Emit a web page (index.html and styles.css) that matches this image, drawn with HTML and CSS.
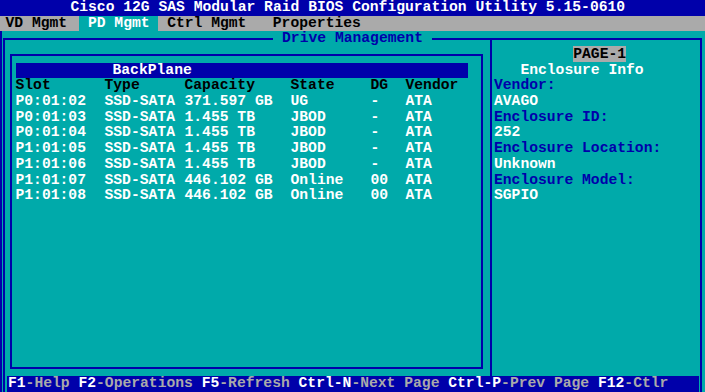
FILE: index.html
```html
<!DOCTYPE html>
<html lang="en">
<head>
    <meta charset="UTF-8">
    <title>Drive Management</title>
    <link rel="stylesheet" href="styles.css">
</head>
<body>
    <div class="screen">
        <div class="titleBar">Cisco 12G SAS Modular Raid BIOS Configuration Utility 5.15-0610</div>
        <div class="menuBar">
            <span class="tab">VD Mgmt</span>
            <span class="tab active">PD Mgmt</span>
            <span class="tab">Ctrl Mgmt</span>
            <span class="tab">Properties</span>
        </div>
        <div class="desk">
            <div class="frame">
                <div class="frameTitle">Drive Management</div>

                <div class="leftPane">
                    <div class="box">
                        <div class="boxHead">BackPlane</div>
                        <div class="driveRow head">
                            <span>Slot</span><span>Type</span><span>Capacity</span><span>State</span><span>DG</span><span>Vendor</span>
                        </div>
                        <div class="driveRow">
                            <span>P0:01:02</span><span>SSD-SATA</span><span>371.597 GB</span><span>UG</span><span>-</span><span>ATA</span>
                        </div>
                        <div class="driveRow">
                            <span>P0:01:03</span><span>SSD-SATA</span><span>1.455 TB</span><span>JBOD</span><span>-</span><span>ATA</span>
                        </div>
                        <div class="driveRow">
                            <span>P0:01:04</span><span>SSD-SATA</span><span>1.455 TB</span><span>JBOD</span><span>-</span><span>ATA</span>
                        </div>
                        <div class="driveRow">
                            <span>P1:01:05</span><span>SSD-SATA</span><span>1.455 TB</span><span>JBOD</span><span>-</span><span>ATA</span>
                        </div>
                        <div class="driveRow">
                            <span>P1:01:06</span><span>SSD-SATA</span><span>1.455 TB</span><span>JBOD</span><span>-</span><span>ATA</span>
                        </div>
                        <div class="driveRow">
                            <span>P1:01:07</span><span>SSD-SATA</span><span>446.102 GB</span><span>Online</span><span>00</span><span>ATA</span>
                        </div>
                        <div class="driveRow">
                            <span>P1:01:08</span><span>SSD-SATA</span><span>446.102 GB</span><span>Online</span><span>00</span><span>ATA</span>
                        </div>
                    </div>
                </div>

                <div class="rightPane">
                    <div class="page"><span>PAGE-1</span></div>
                    <div class="infoTitle">Enclosure Info</div>
                    <div class="label">Vendor:</div>
                    <div>AVAGO</div>
                    <div class="label">Enclosure ID:</div>
                    <div>252</div>
                    <div class="label">Enclosure Location:</div>
                    <div>Unknown</div>
                    <div class="label">Enclosure Model:</div>
                    <div>SGPIO</div>
                </div>

                <div class="statusBar"><b>F1</b>-Help <b>F2</b>-Operations <b>F5</b>-Refresh <b>Ctrl-N</b>-Next Page <b>Ctrl-P</b>-Prev Page <b>F12</b>-Ctlr</div>
            </div>
        </div>
    </div>
</body>
</html>
```

FILE: styles.css
```css
html, body{
    margin: 0;
}
body{
    width: 705px;
    height: 392px;
    overflow: hidden;
    background: #00aaaa;
    color: #fff;
    font: bold 14.6875px/15.68px "Liberation Mono", "DejaVu Sans Mono", monospace;
}

.screen{
    display: flex;
    flex-direction: column;
    height: 392px;
}

/* top bars */
.titleBar{
    height: 15.68px;
    background: #0000aa;
    padding-left: 8ch;
    white-space: pre;
}
.menuBar{
    display: flex;
    height: 15.68px;
    background: #aaaaaa;
    color: #000;
}
.tab{
    padding: 0 1ch;
}
.tab:first-child{
    padding: 0 12px 0 5.5px;
}
.tab:last-child{
    margin-left: 1ch;
}
.tab.active{
    background: #00aaaa;
    color: #fff;
}

/* main window */
.desk{
    flex: 1;
    display: flex;
    border-left: 2px solid #0000aa;
    padding: 6.5px 3px 0 1px;
}
.frame{
    flex: 1;
    display: grid;
    grid-template-columns: 485px 1fr;
    grid-template-rows: auto 1fr 15.68px;
    border: 2px solid #0000aa;
    border-bottom: 0;
}
.frameTitle{
    grid-row: 1;
    grid-column: 1 / -1;
    justify-self: center;
    margin-top: -8.5px;
    height: 15.68px;
    padding: 0 1ch;
    background: #00aaaa;
    color: #0000aa;
}

.leftPane{
    grid-row: 1 / 3;
    grid-column: 1;
    display: flex;
    padding: 14px 7px 7.3px 5px;
}
.box{
    flex: 1;
    border: 2px solid #0000aa;
    padding: 6.86px 13px 0 3.5px;
}
.boxHead{
    background: #0000aa;
    padding-left: 97px;
}
.driveRow{
    display: grid;
    grid-template-columns: 89px 80px 106px 80px 35px 1fr;
    white-space: pre;
}
.driveRow.head{
    color: #000;
}

.rightPane{
    grid-row: 1 / 3;
    grid-column: 2;
    border-left: 2px solid #0000aa;
    padding: 7.18px 0 0 2px;
}
.page{
    margin-left: 9ch;
}
.page span{
    background: #aaaaaa;
    color: #000;
}
.infoTitle{
    margin-left: 3ch;
}
.label{
    color: #0000aa;
}

/* bottom help line */
.statusBar{
    grid-row: 3;
    grid-column: 1 / -1;
    margin: 0 1px 0 2px;
    padding-left: 1px;
    background: #0000aa;
    color: #aaaaaa;
    white-space: pre;
}
.statusBar b{
    color: #fff;
}
```
